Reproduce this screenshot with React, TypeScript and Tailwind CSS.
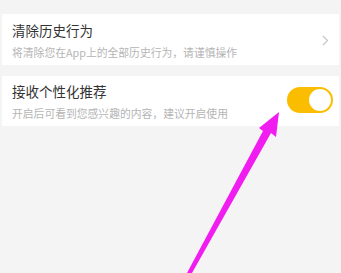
export default function App() {
  return (
    <div className="relative h-[273px] w-[341px] overflow-hidden bg-[#f4f4f4] px-[2px] pt-[14px]" style={{ fontFamily: '"Noto Sans CJK SC", "Noto Sans", sans-serif' }}>
      <div className="flex h-[51px] items-start justify-between bg-white pl-[10px] pr-[10px]">
        <div className="flex flex-col pt-[8px]">
          <div className="h-[16px] text-[13.5px] leading-[16px] text-[#333333]">清除历史行为</div>
          <div className="mt-[7px] h-[14px] text-[10.8px] leading-[14px] text-[#b5b5b5]">将清除您在App上的全部历史行为，请谨慎操作</div>
        </div>
        <svg className="mt-[21px]" width="7" height="11" viewBox="0 0 7 11" fill="none">
          <path d="M1 1l4.5 4.5L1 10" stroke="#c4c4c4" strokeWidth="1.2" />
        </svg>
      </div>
      <div className="mt-[11px] flex h-[50px] items-start justify-between bg-white pl-[10px] pr-[6px]">
        <div className="flex flex-col pt-[7px]">
          <div className="h-[16px] text-[13.5px] leading-[16px] text-[#333333]">接收个性化推荐</div>
          <div className="mt-[7px] h-[14px] text-[10.8px] leading-[14px] text-[#b5b5b5]">开启后可看到您感兴趣的内容，建议开启使用</div>
        </div>
        <div className="mt-[11px] flex h-[26px] w-[46px] items-center justify-end rounded-full bg-[#fbbd00] pr-[2px]">
          <div className="h-[22px] w-[22px] rounded-full bg-white" />
        </div>
      </div>
      <svg className="absolute left-0 top-0" width="341" height="273" viewBox="0 0 341 273">
        <polygon points="279,112 276,137 271,133 192,273 187,273 263,131 259,128" fill="#f01cf0" />
      </svg>
    </div>
  )
}
